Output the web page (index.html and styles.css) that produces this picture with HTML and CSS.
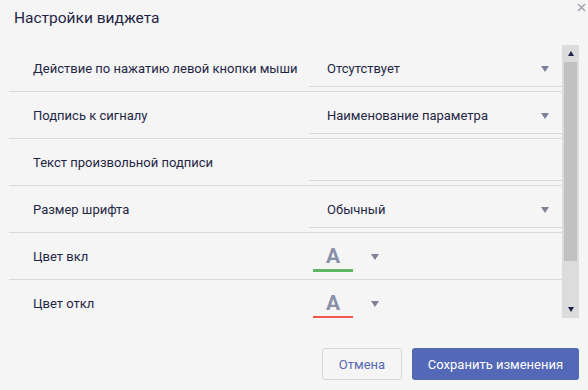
FILE: index.html
```html
<!DOCTYPE html>
<html lang="ru">
<head>
<meta charset="utf-8">
<title>Настройки виджета</title>
<link rel="stylesheet" href="styles.css">
</head>
<body>
<div class="dialog">
  <div class="header">
    <div class="title">Настройки виджета</div>
    <button class="close" aria-label="Закрыть">
      <svg width="9" height="9" viewBox="0 0 9 9"><path d="M1 1L8 8M8 1L1 8" stroke="#a3a7b3" stroke-width="1.6" fill="none"/></svg>
    </button>
  </div>
  <div class="main">
    <div class="list">
      <div class="row">
        <div class="label">Действие по нажатию левой кнопки мыши</div>
        <div class="field select"><span class="value">Отсутствует</span><span class="caret"></span></div>
      </div>
      <div class="row">
        <div class="label">Подпись к сигналу</div>
        <div class="field select"><span class="value">Наименование параметра</span><span class="caret"></span></div>
      </div>
      <div class="row">
        <div class="label">Текст произвольной подписи</div>
        <div class="field"></div>
      </div>
      <div class="row">
        <div class="label">Размер шрифта</div>
        <div class="field select"><span class="value">Обычный</span><span class="caret"></span></div>
      </div>
      <div class="row">
        <div class="label">Цвет вкл</div>
        <div class="color-pick">
          <div class="swatch"><span class="swatch-a">A</span><span class="bar bar-green"></span></div>
          <span class="caret caret-color"></span>
        </div>
      </div>
      <div class="row">
        <div class="label">Цвет откл</div>
        <div class="color-pick">
          <div class="swatch"><span class="swatch-a">A</span><span class="bar bar-red"></span></div>
          <span class="caret caret-color"></span>
        </div>
      </div>
    </div>
    <div class="scrollbar">
      <div class="sb-btn"><span class="sb-up"></span></div>
      <div class="sb-track"><div class="sb-thumb"></div></div>
      <div class="sb-btn"><span class="sb-down"></span></div>
    </div>
  </div>
  <div class="footer">
    <button class="btn btn-cancel">Отмена</button>
    <button class="btn btn-save">Сохранить изменения</button>
  </div>
</div>
</body>
</html>
```
FILE: styles.css
```css
html, body {
  margin: 0;
  padding: 0;
  background: #f5f5f5;
}
body {
  font-family: Roboto, "Noto Sans", sans-serif;
  color: #20274a;
  width: 588px;
  height: 390px;
  overflow: hidden;
}
.dialog {
  position: relative;
  padding: 0 9px;
}
.header {
  height: 45px;
  box-sizing: border-box;
  padding: 8px 0 0 5px;
}
.title {
  font-size: 15.5px;
  line-height: 20px;
  color: #1f2645;
}
.close {
  position: absolute;
  top: 3px;
  right: 2px;
  width: 9px;
  height: 9px;
  padding: 0;
  border: 0;
  background: none;
  display: block;
}
.close svg { display: block; }
.main {
  display: flex;
  height: 273px;
}
.list {
  flex: 1;
  overflow: hidden;
}
.row {
  display: grid;
  grid-template-columns: 300px 1fr;
  height: 46px;
  border-bottom: 1px solid #dadada;
}
.label {
  align-self: center;
  padding-left: 24px;
  font-size: 13px;
  line-height: 16px;
  color: #1f2645;
  padding-top: 2px;
}
.field {
  align-self: start;
  height: 41px;
  border-bottom: 1px solid #d9d9d9;
  box-sizing: content-box;
}
.select {
  display: flex;
  align-items: center;
  justify-content: space-between;
  padding: 6px 13px 0 18px;
  height: 35px;
  font-size: 13px;
  color: #1f2645;
}
.caret {
  width: 0;
  height: 0;
  border-left: 4px solid transparent;
  border-right: 4px solid transparent;
  border-top: 6px solid #7d8296;
}
.color-pick {
  display: flex;
  align-items: flex-start;
  gap: 18px;
  padding: 13px 0 0 4px;
}
.swatch {
  width: 40px;
  display: flex;
  flex-direction: column;
  align-items: center;
}
.swatch-a {
  font-size: 21px;
  line-height: 21px;
  font-weight: 700;
  color: #8a90a8;
}
.bar {
  width: 40px;
  height: 3px;
  margin-top: 2px;
}
.bar-green { background: #5db663; }
.bar-red { background: #f0584f; }
.caret-color { margin-top: 8px; }
.scrollbar {
  width: 17px;
  background: #dcdcdc;
  display: flex;
  flex-direction: column;
}
.sb-btn {
  height: 17px;
  display: flex;
  align-items: center;
  justify-content: center;
}
.sb-up {
  width: 0; height: 0;
  border-left: 3.5px solid transparent;
  border-right: 3.5px solid transparent;
  border-bottom: 5px solid #1d2347;
}
.sb-down {
  width: 0; height: 0;
  border-left: 3.5px solid transparent;
  border-right: 3.5px solid transparent;
  border-top: 5px solid #1d2347;
}
.sb-track {
  flex: 1;
  padding: 0 2px;
}
.sb-thumb {
  height: 199px;
  background: #c1c1c1;
}
.footer {
  display: flex;
  justify-content: flex-end;
  gap: 10px;
  padding-top: 30px;
}
.btn {
  height: 32px;
  border-radius: 3px;
  font-family: Roboto, "Noto Sans", sans-serif;
  font-size: 13px;
  cursor: pointer;
}
.btn-cancel {
  width: 80px;
  border: 1px solid #d6d6d8;
  background: #f5f5f5;
  color: #5868b3;
}
.btn-save {
  width: 167px;
  border: 0;
  background: #5368b7;
  color: #ffffff;
}
```
